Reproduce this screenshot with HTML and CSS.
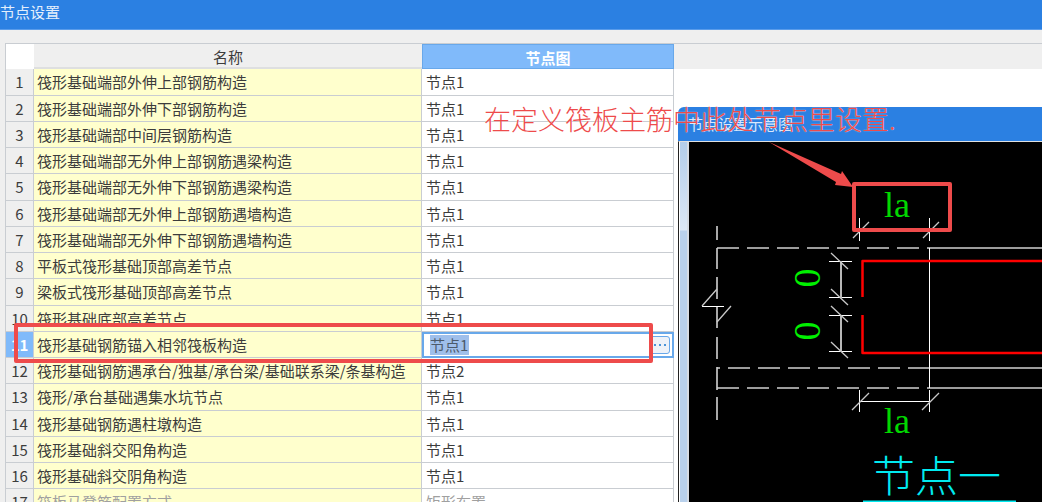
FILE: index.html
```html
<!DOCTYPE html>
<html lang="zh-CN">
<head>
<meta charset="utf-8">
<meta name="viewport" content="width=device-width, initial-scale=1">
<title>节点设置</title>
<link rel="stylesheet" href="styles.css">
</head>
<body>
<header class="titlebar">节点设置</header>
<main class="workspace">
  <table class="nodes">
    <colgroup><col class="col-num"><col class="col-name"><col class="col-node"></colgroup>
    <thead><tr><td class="corner"></td><th scope="col">名称</th><th scope="col" class="active">节点图</th></tr></thead>
    <tbody>
      <tr><th scope="row">1</th><td>筏形基础端部外伸上部钢筋构造</td><td>节点1</td></tr>
      <tr><th scope="row">2</th><td>筏形基础端部外伸下部钢筋构造</td><td>节点1</td></tr>
      <tr><th scope="row">3</th><td>筏形基础端部中间层钢筋构造</td><td>节点1</td></tr>
      <tr><th scope="row">4</th><td>筏形基础端部无外伸上部钢筋遇梁构造</td><td>节点1</td></tr>
      <tr><th scope="row">5</th><td>筏形基础端部无外伸下部钢筋遇梁构造</td><td>节点1</td></tr>
      <tr><th scope="row">6</th><td>筏形基础端部无外伸上部钢筋遇墙构造</td><td>节点1</td></tr>
      <tr><th scope="row">7</th><td>筏形基础端部无外伸下部钢筋遇墙构造</td><td>节点1</td></tr>
      <tr><th scope="row">8</th><td>平板式筏形基础顶部高差节点</td><td>节点1</td></tr>
      <tr><th scope="row">9</th><td>梁板式筏形基础顶部高差节点</td><td>节点1</td></tr>
      <tr><th scope="row">10</th><td>筏形基础底部高差节点</td><td>节点1</td></tr>
      <tr class="selected"><th scope="row">11</th><td>筏形基础钢筋锚入相邻筏板构造</td><td class="edit-cell"><div class="editor"><input class="value" type="text" value="节点1" aria-label="节点图"><button class="more" type="button" aria-label="选择节点"><svg width="18" height="16" viewBox="0 0 18 16"><path d="M3 7h2v2H3zM8 7h2v2H8zM13 7h2v2h-2z" fill="#4a93d8"/></svg></button></div></td></tr>
      <tr><th scope="row">12</th><td>筏形基础钢筋遇承台/独基/承台梁/基础联系梁/条基构造</td><td>节点2</td></tr>
      <tr><th scope="row">13</th><td>筏形/承台基础遇集水坑节点</td><td>节点1</td></tr>
      <tr><th scope="row">14</th><td>筏形基础钢筋遇柱墩构造</td><td>节点1</td></tr>
      <tr><th scope="row">15</th><td>筏形基础斜交阳角构造</td><td>节点1</td></tr>
      <tr><th scope="row">16</th><td>筏形基础斜交阴角构造</td><td>节点1</td></tr>
      <tr class="muted"><th scope="row">17</th><td>筏板马凳筋配置方式</td><td>矩形布置</td></tr>
    </tbody>
  </table>
  <div class="blank"></div>
</main>

<section class="preview">
  <h2 class="preview-title">节点设置示意图</h2>
  <div class="preview-body">
    <div class="rail"></div>
    <svg class="drawing" role="img" aria-label="节点一">
      <g transform="translate(-689 -142)" fill="none">
        <g stroke="#a8a8a8" stroke-width="2">
          <path d="M717 226v14M717 248v21M717 277v22M717 306v22M717 337v22M717 367v23M717 397v23"/>
        </g>
        <g stroke="#d0d0d0" stroke-width="1.5">
          <path d="M717 248H927M717 388H927" stroke-dasharray="22 8"/>
          <path d="M717 368h3M728 368H908" stroke-dasharray="22 8"/>
          <path d="M927 248H4000M908 368H4000M927 388H4000"/>
        </g>
        <g stroke="#fff" stroke-width="1">
          <path d="M929.5 248V388M859.5 218v23M929.5 218v23M859.5 390v22M929.5 390v22M859 401.5h71"/>
          <path d="M702 306.5h22M829 261.5h23M829 297.5h23M829 315.5h23M829 351.5h23"/>
        </g>
        <path stroke="#b8b8b8" stroke-width="2" d="M841 261v37M841 315v37"/>
        <g stroke="#c8c8c8" stroke-width="1.3">
          <path d="M853 238l16-16M923 238l16-16M852 410l17-17M922 410l17-17"/>
          <path d="M702 306l15-17M717 322l14-16M831 253l17 16M831 289l17 16M831 306l17 16M831 342l17 16"/>
        </g>
        <path stroke="#f00" stroke-width="2.5" stroke-linejoin="round" d="M862.5 297V261H4000M862.5 315V353H4000"/>
        <text class="dim" x="897" y="217">la</text>
        <text class="dim" x="897" y="433">la</text>
        <text class="zero" transform="translate(820 278) rotate(-90)">0</text>
        <text class="zero" transform="translate(820 331) rotate(-90)">0</text>
        <text class="caption" x="872" y="492">节点一</text>
        <path stroke="#00eaf0" stroke-width="2" d="M863 501.500H1016"/>
      </g>
    </svg>
  </div>
</section>

<svg class="marks" aria-hidden="true">
  <g fill="none" stroke="#ee4b4b" stroke-width="4" stroke-linejoin="round">
    <path d="M16 325H651V361H16z"/>
    <path d="M854 184H950V230H854z"/>
  </g>
  <path fill="#ee4b4b" d="M769 142L841 174L842 171L853 187L835 185L836 182z"/>
</svg>
<p class="note">在定义筏板主筋中此处节点里设置.</p>
</body>
</html>
```
FILE: styles.css
```css
* { box-sizing: border-box; }
body {
  margin: 0;
  height: 100vh;
  display: flex;
  flex-direction: column;
  position: relative;
  overflow: hidden;
  background: #efefef;
  color: #3c3c3c;
  font: 15px/20px "Noto Sans CJK SC", sans-serif;
}
.titlebar {
  flex: none;
  height: 30px;
  padding: 2px 0;
  background: #2b80e2;
  border-bottom: 1px solid #5a9cea;
  color: #e4effc;
}
.workspace {
  flex: 1;
  min-height: 0;
  display: flex;
  align-items: flex-start;
  margin: 13px 0 0 5px;
  border-top: 1px solid #c9cdd2;
  border-left: 1px solid #c9cdd2;
}
.nodes {
  flex: none;
  width: 668px;
  table-layout: fixed;
  border-collapse: separate;
  border-spacing: 0;
}
.col-num { width: 28px; }
.col-name { width: 388px; }
.col-node { width: 252px; }
.nodes th, .nodes td {
  height: 26px;
  padding: 0 4px;
  border-right: 1px solid #c9cdd2;
  border-bottom: 1px solid #c9cdd2;
  text-align: left;
  font-weight: 400;
  white-space: nowrap;
}
.nodes tbody tr:nth-child(4n+1) > * { height: 27px; }
.nodes thead th {
  height: 25px;
  padding: 2px 4px 0;
  border-right: 0;
  border-bottom: 2px solid #dedfe0;
  text-align: center;
}
.nodes thead .corner { height: 25px; border: 0; background: #fff; }
.nodes thead .active {
  background: #80bafa;
  border: 1px solid #68a8ea;
  color: #fff;
  font-weight: 700;
}
.nodes tbody th { padding: 0; text-align: center; background: #efefef; }
.nodes tbody td { background: #fff; }
.nodes tbody td:nth-child(2) { padding-left: 3px; background: #ffffcd; }
.nodes .selected th { background: #80bafa; color: #fff; font-weight: 700; }
.nodes .muted td { color: #a0a0a0; }
.nodes .edit-cell { padding: 0; border: 0; }
.editor {
  height: 26px;
  display: flex;
  align-items: center;
  justify-content: space-between;
  padding: 0 2px 0 6px;
  border: 2px solid #68a8ea;
}
.value {
  width: 39px;
  height: 20px;
  padding: 0;
  border: 0;
  background: #9fbfeb;
  color: #4c5a6b;
  font: inherit;
}
.more {
  display: flex;
  width: 20px;
  height: 18px;
  padding: 0;
  border: 1px solid #68a8ea;
  border-radius: 3px;
  background: #eef2f8;
}
.blank { flex: 1; align-self: stretch; border-top: 25px solid #efefef; background: #fff; }
.preview {
  position: absolute;
  inset: 107px 0 0 678px;
  display: flex;
  flex-direction: column;
  border-radius: 6px 0 0 0;
  overflow: hidden;
}
.preview-title {
  margin: 0;
  padding: 7px 10px;
  background: #2b80e2;
  color: #d8e8fc;
  font-size: 15px;
  font-weight: 400;
  line-height: 20px;
}
.preview-body {
  flex: 1;
  min-height: 0;
  display: flex;
  border-top: 1px solid #e0e0e0;
  border-left: 1px solid #222;
  background: #000;
}
.rail {
  flex: none;
  width: 10px;
  border-left: 1px solid #fff;
  border-right: 2px solid #d6dce4;
  background: linear-gradient(#b3cdea, #dce8f6 88px, #b9d1ec 89px);
}
.drawing { flex: 1; height: 100%; min-width: 0; }
.dim { fill: #00d800; font: 36px "Liberation Serif", serif; text-anchor: middle; }
.zero { fill: #00f000; font: 38px "Liberation Serif", serif; text-anchor: middle; }
.caption { fill: #00eaf0; font: 300 43px "Noto Sans CJK SC", sans-serif; }
.marks {
  position: absolute;
  inset: 0;
  width: 100%;
  height: 100%;
  pointer-events: none;
}
.note {
  position: absolute;
  left: 484px;
  top: 101px;
  margin: 0;
  color: #ee4b4b;
  font-size: 27px;
  font-weight: 300;
  line-height: 36px;
  white-space: nowrap;
  text-shadow: 0 0 1px #fff;
}
```
